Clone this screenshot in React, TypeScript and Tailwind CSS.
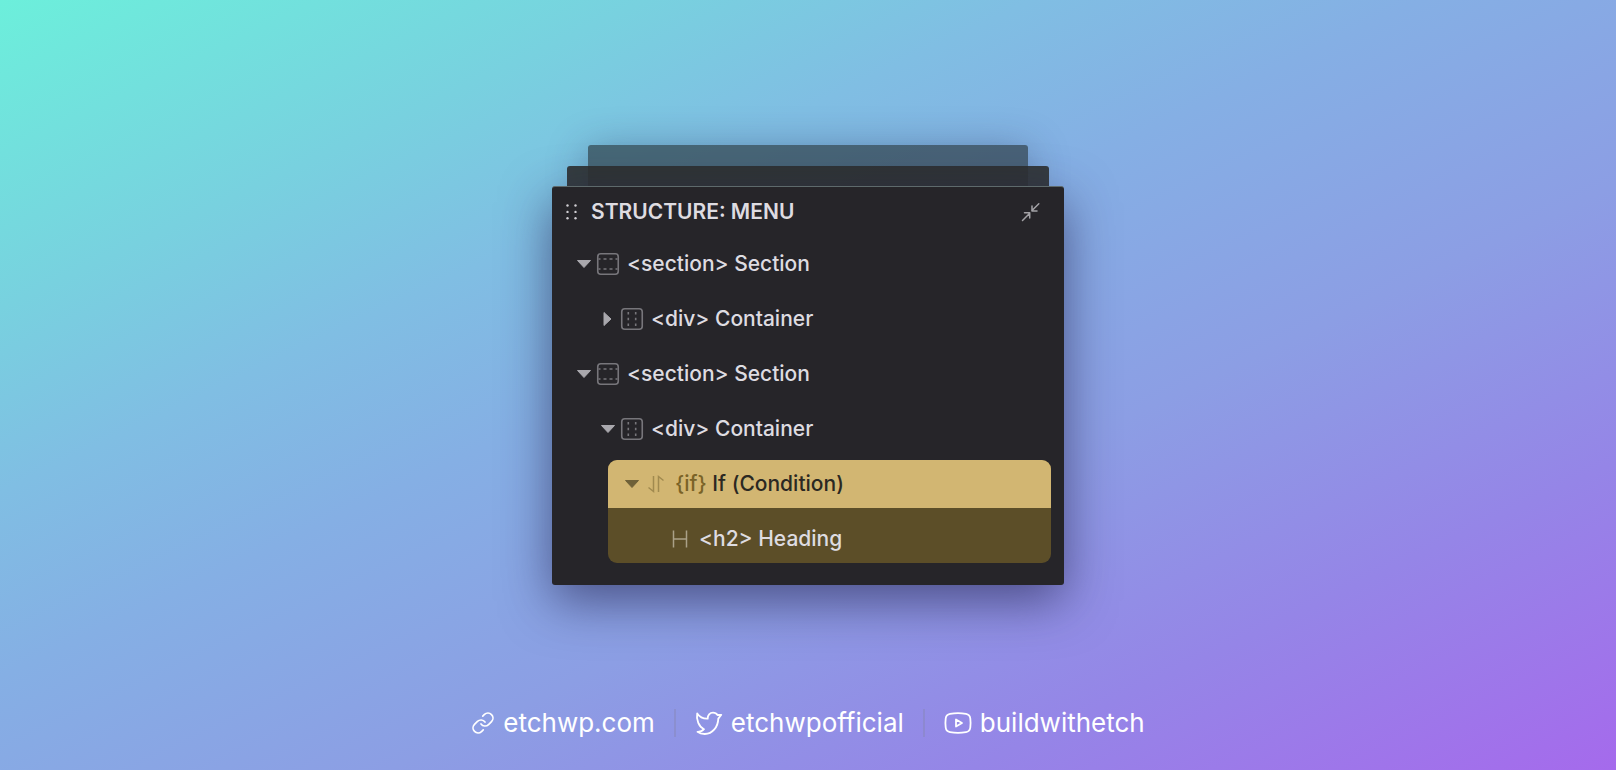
import type { ReactNode } from "react";

function Caret({ open = true, className = "text-[#a9a8ad]" }: { open?: boolean; className?: string }) {
  return (
    <button
      type="button"
      aria-label={open ? "Collapse" : "Expand"}
      aria-expanded={open}
      className={`flex h-6 w-6 shrink-0 items-center justify-center ${className}`}
    >
      <svg viewBox="0 0 24 24" className="h-6 w-6" fill="currentColor" stroke="currentColor" strokeWidth="1" strokeLinejoin="round">
        {open ? <path d="M5.5 8.5h13L12 15.5z" /> : <path d="M8 5.5v13l7-6.5z" />}
      </svg>
    </button>
  );
}

function BoxIcon({ kind }: { kind: "section" | "container" }) {
  return (
    <svg viewBox="0 0 24 24" className="h-6 w-6 shrink-0 text-[#77767b]" fill="none" stroke="currentColor" strokeWidth="1.6">
      <rect x="1.75" y="1.75" width="20.5" height="20.5" rx="3" />
      {kind === "section" ? (
        <path d="M2.5 7h2M7.5 7h3M13.5 7h3M19.5 7h2M2.5 17h2M7.5 17h3M13.5 17h3M19.5 17h2" />
      ) : (
        <path d="M8.3 5v2.500M8.300 10.700v2.600M8.300 16.500v2.500M15.700 5v2.500M15.700 10.700v2.600M15.700 16.500v2.500" />
      )}
    </svg>
  );
}

function Row({ caret, icon, children }: { caret: ReactNode; icon: ReactNode; children: ReactNode }) {
  return (
    <div className="flex h-[55px] items-center">
      {caret}
      {icon}
      <span className="ml-[7px] whitespace-nowrap">{children}</span>
    </div>
  );
}

function FooterLink({ href, icon, children }: { href: string; icon: ReactNode; children: ReactNode }) {
  return (
    <a href={href} className="flex items-center gap-2 whitespace-nowrap">
      {icon}
      {children}
    </a>
  );
}

const iconProps = {
  viewBox: "0 0 28 28",
  className: "h-7 w-7 shrink-0",
  fill: "none",
  stroke: "currentColor",
  strokeWidth: 1.8,
  strokeLinecap: "round",
  strokeLinejoin: "round",
} as const;

export default function App() {
  return (
    <div className="flex min-h-screen flex-col items-center bg-[linear-gradient(to_bottom_right,#6cefdb_0%,#78d1df_20%,#80bee3_32%,#85afe4_44%,#8c9ee4_62%,#9585e7_80%,#a56aec_100%)] px-4 pt-[145px] pb-7 font-['Inter',sans-serif]">
      <main className="flex w-full max-w-[512px] flex-col items-center">
        <div className="h-[41px] w-[86%] rounded-t-[3px] bg-[#28363c]/65 shadow-[0_6px_40px_rgba(35,45,80,0.4)]" />
        <div className="relative -mt-[20px] h-[20px] w-[94%] rounded-t-[3px] bg-[#2c2f2d]/90" />
        <section className="relative w-full rounded-[3px] border-t border-[#5e6a6c] bg-[#262529] pb-[22px] text-[21px] leading-7 font-medium text-[#dedce1] shadow-[0_16px_50px_rgba(40,38,85,0.65)]">
          <header className="flex h-[49px] items-center pr-[22px] pl-3">
            <svg viewBox="0 0 16 18" className="h-[18px] w-4 shrink-0" fill="#d0ced3" aria-hidden="true">
              {[2.5, 8.9, 15.3].map((y) => (
                <g key={y}>
                  <circle cx="3.5" cy={y} r="1.2" />
                  <circle cx="11.5" cy={y} r="1.2" />
                </g>
              ))}
            </svg>
            <h1 className="ml-[11px] flex-1 font-semibold">STRUCTURE: MENU</h1>
            <button type="button" aria-label="Minimize panel" className="text-[#a3a2a6]">
              <svg viewBox="0 0 22 22" className="h-[22px] w-[22px]" fill="none" stroke="currentColor" strokeWidth="1.5" strokeLinecap="round" strokeLinejoin="round">
                <path d="M2.5 19.5l7-7M4.500 11.800H9.700V17M18.800 2.800l-7 7M12 5V10H17" />
              </svg>
            </button>
          </header>

          <div className="pr-[13px] pl-5">
            <Row caret={<Caret />} icon={<BoxIcon kind="section" />}>&lt;section&gt; Section</Row>
            <div className="pl-6">
              <Row caret={<Caret open={false} />} icon={<BoxIcon kind="container" />}>&lt;div&gt; Container</Row>
            </div>
            <Row caret={<Caret />} icon={<BoxIcon kind="section" />}>&lt;section&gt; Section</Row>
            <div className="pl-6">
              <Row caret={<Caret />} icon={<BoxIcon kind="container" />}>&lt;div&gt; Container</Row>
            </div>
            <div className="mt-1 ml-9 overflow-hidden rounded-[9px] bg-[#5c4e28]">
              <div className="flex h-12 items-center bg-[#d2b672] pl-3 text-[#2b2822]">
                <Caret className="text-[#6f6138]" />
                <svg viewBox="0 0 24 24" className="h-6 w-6 shrink-0 text-[#a18a4f]" fill="none" stroke="currentColor" strokeWidth="1.5" aria-hidden="true">
                  <path d="M4.5 15.5l5 4V4M19.5 8.5l-5-4V20" />
                </svg>
                <span className="ml-[7px] whitespace-nowrap">
                  <span className="text-[#7a6327]">{"{if}"}</span> If (Condition)
                </span>
              </div>
              <div className="flex h-[55px] items-center pt-1.5 pl-[60px]">
                <svg viewBox="0 0 24 24" className="h-6 w-6 shrink-0 text-[#aaa188]" fill="none" stroke="currentColor" strokeWidth="1.5" aria-hidden="true">
                  <path d="M5.5 3.5v17M18.5 3.5v17M5.5 12h13" />
                </svg>
                <span className="ml-[7px] whitespace-nowrap">&lt;h2&gt; Heading</span>
              </div>
            </div>
          </div>
        </section>
      </main>

      <footer className="mt-auto flex items-center gap-[19px] text-[26px] leading-[38px] text-white [font-feature-settings:'calt'_0,'liga'_0]">
        <FooterLink
          href="https://etchwp.com"
          icon={
            <svg {...iconProps} viewBox="0 0 24 24" className="h-6 w-6 shrink-0" strokeWidth={1.7}>
              <path d="M10 13a5 5 0 0 0 7.54.54l3-3a5 5 0 0 0-7.07-7.07l-1.72 1.71" />
              <path d="M14 11a5 5 0 0 0-7.54-.54l-3 3a5 5 0 0 0 7.07 7.07l1.71-1.71" />
            </svg>
          }
        >
          etchwp.com
        </FooterLink>
        <span className="h-7 w-0.5 bg-[#8585b0]/40" />
        <FooterLink
          href="https://twitter.com/etchwpofficial"
          icon={
            <svg {...iconProps}>
              <path d="M2.2 4.5C4.5 8 8.5 9.9 12.7 9.7C12.4 6 15 3.6 18 3.6C20.2 3.6 21.6 4.5 22.5 6L26.3 5.8L23.3 9.6C23 18 17.5 25 9.8 25C7 25 4.3 24.3 2.5 22.9C5 23 7.5 22 9 20.2C4 18 1 11 2.2 4.5z" />
            </svg>
          }
        >
          etchwpofficial
        </FooterLink>
        <span className="h-7 w-0.5 bg-[#8585b0]/40" />
        <FooterLink
          href="https://youtube.com/@buildwithetch"
          icon={
            <svg {...iconProps}>
              <path d="M6 4.9C11 4 17 4 22 4.9C24.8 5.4 26 7 26.3 9.5C26.7 12.5 26.7 15.5 26.3 18.5C26 21 24.8 22.6 22 23.1C17 24 11 24 6 23.1C3.2 22.6 2 21 1.7 18.5C1.3 15.5 1.3 12.5 1.7 9.5C2 7 3.2 5.4 6 4.9z" />
              <path d="M12 10.5v7l6-3.5z" />
            </svg>
          }
        >
          buildwithetch
        </FooterLink>
      </footer>
    </div>
  );
}
